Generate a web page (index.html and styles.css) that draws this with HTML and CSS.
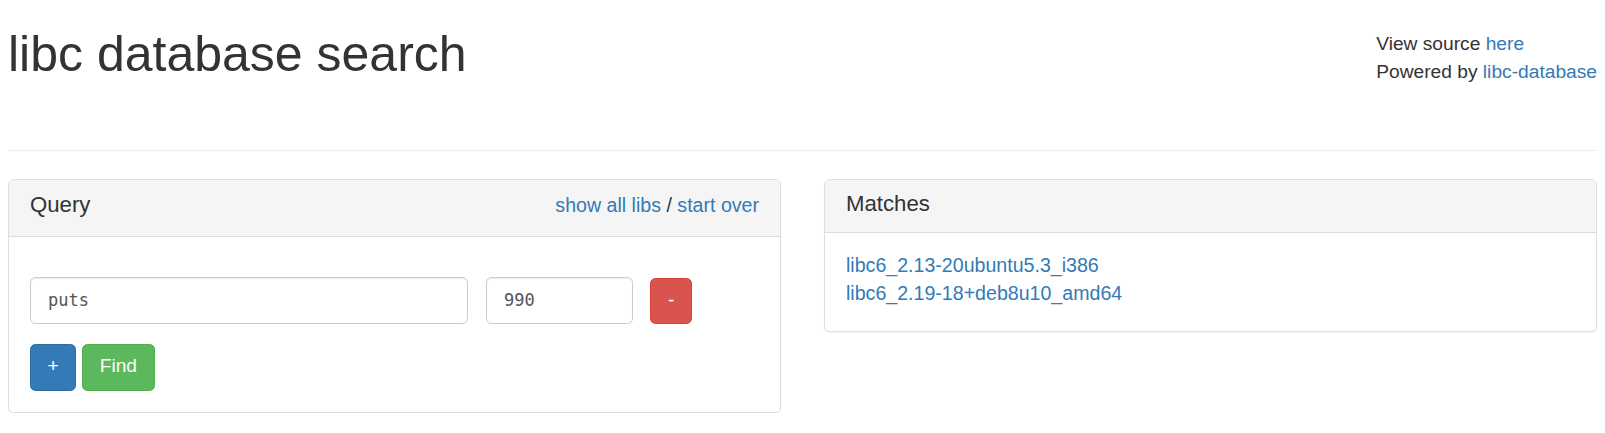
FILE: index.html
```html
<!DOCTYPE html>
<html>
<head>
<meta charset="utf-8">
<title>libc database search</title>
<link rel="stylesheet" href="styles.css">
</head>
<body>
<div class="page-header">
  <h1 class="title">libc database search</h1>
  <div class="about">
    <div>View source <a href="#">here</a></div>
    <div>Powered by <a href="#">libc-database</a></div>
  </div>
</div>
<hr class="divider">
<div class="columns">
  <div class="panel">
    <div class="panel-heading heading-query">
      <h3 class="panel-title">Query</h3>
      <div class="heading-links"><a href="#">show all libs</a> / <a href="#">start over</a></div>
    </div>
    <div class="panel-body query-body">
      <div class="query-row">
        <input class="form-control input-name" type="text" value="puts">
        <input class="form-control input-addr" type="text" value="990">
        <button class="btn btn-danger">-</button>
      </div>
      <div class="button-row">
        <button class="btn btn-primary">+</button>
        <button class="btn btn-success">Find</button>
      </div>
    </div>
  </div>
  <div class="panel">
    <div class="panel-heading">
      <h3 class="panel-title">Matches</h3>
    </div>
    <div class="panel-body matches-body">
      <div><a href="#">libc6_2.13-20ubuntu5.3_i386</a></div>
      <div><a href="#">libc6_2.19-18+deb8u10_amd64</a></div>
    </div>
  </div>
</div>
</body>
</html>
```
FILE: styles.css
```css
html, body {
  background: #fff;
}
body {
  margin: 0 8px;
  font-family: "Liberation Sans", Arial, sans-serif;
  font-size: 19.2px;
  line-height: 27.9px;
  color: #333;
}
a {
  color: #337ab7;
  text-decoration: none;
}
.page-header {
  display: flex;
  justify-content: space-between;
  align-items: flex-start;
}
.title {
  margin: 27px 0 0;
  font-size: 50px;
  font-weight: 400;
  line-height: 55px;
  color: #333;
}
.about {
  margin-top: 30px;
}
.divider {
  margin: 64px 0 28px;
  border: 0;
  border-top: 1px solid #eee;
  height: 0;
}
.columns {
  display: grid;
  grid-template-columns: 1fr 1fr;
  column-gap: 43px;
  align-items: start;
}
.panel {
  border: 1px solid #ddd;
  border-radius: 5.5px;
  background: #fff;
  box-shadow: 0 1px 1px rgba(0, 0, 0, 0.05);
  font-size: 19.6px;
}
.panel-heading {
  display: flex;
  justify-content: space-between;
  align-items: baseline;
  background: #f5f5f5;
  border-bottom: 1px solid #ddd;
  border-top-left-radius: 4.5px;
  border-top-right-radius: 4.5px;
  padding: 12px 21px 16px;
}
.panel-title {
  margin: 0;
  font-size: 22.2px;
  font-weight: 400;
  line-height: 24.4px;
  color: #333;
}
.panel-body {
  padding: 21px;
}
.query-body {
  padding-top: 40px;
}
.query-row {
  display: flex;
  align-items: flex-start;
}
.form-control {
  box-sizing: border-box;
  height: 47px;
  padding: 8px 17px;
  font-family: "DejaVu Sans Mono", monospace;
  font-size: 17px;
  color: #555;
  background: #fff;
  border: 1px solid #ccc;
  border-radius: 5.5px;
  box-shadow: inset 0 1px 1px rgba(0, 0, 0, 0.075);
  outline: none;
}
.input-name {
  width: 438px;
  margin-right: 18px;
}
.input-addr {
  width: 147px;
  margin-right: 17px;
}
.button-row {
  display: flex;
  gap: 6px;
  margin-top: 20px;
}
.btn {
  box-sizing: border-box;
  height: 47px;
  padding: 7px 16.5px 11px;
  font-family: "Liberation Sans", Arial, sans-serif;
  font-size: 19.2px;
  line-height: 27px;
  color: #fff;
  border: 1px solid transparent;
  border-radius: 5.5px;
}
.btn-danger {
  background: #d9534f;
  border-color: #d43f3a;
  height: 46px;
  margin-top: 1px;
  padding-left: 17px;
  padding-right: 17px;
}
.btn-primary {
  background: #337ab7;
  border-color: #2e6da4;
}
.btn-success {
  background: #5cb85c;
  border-color: #4cae4c;
}
.matches-body {
  padding: 19px 21px 23px;
}
```
